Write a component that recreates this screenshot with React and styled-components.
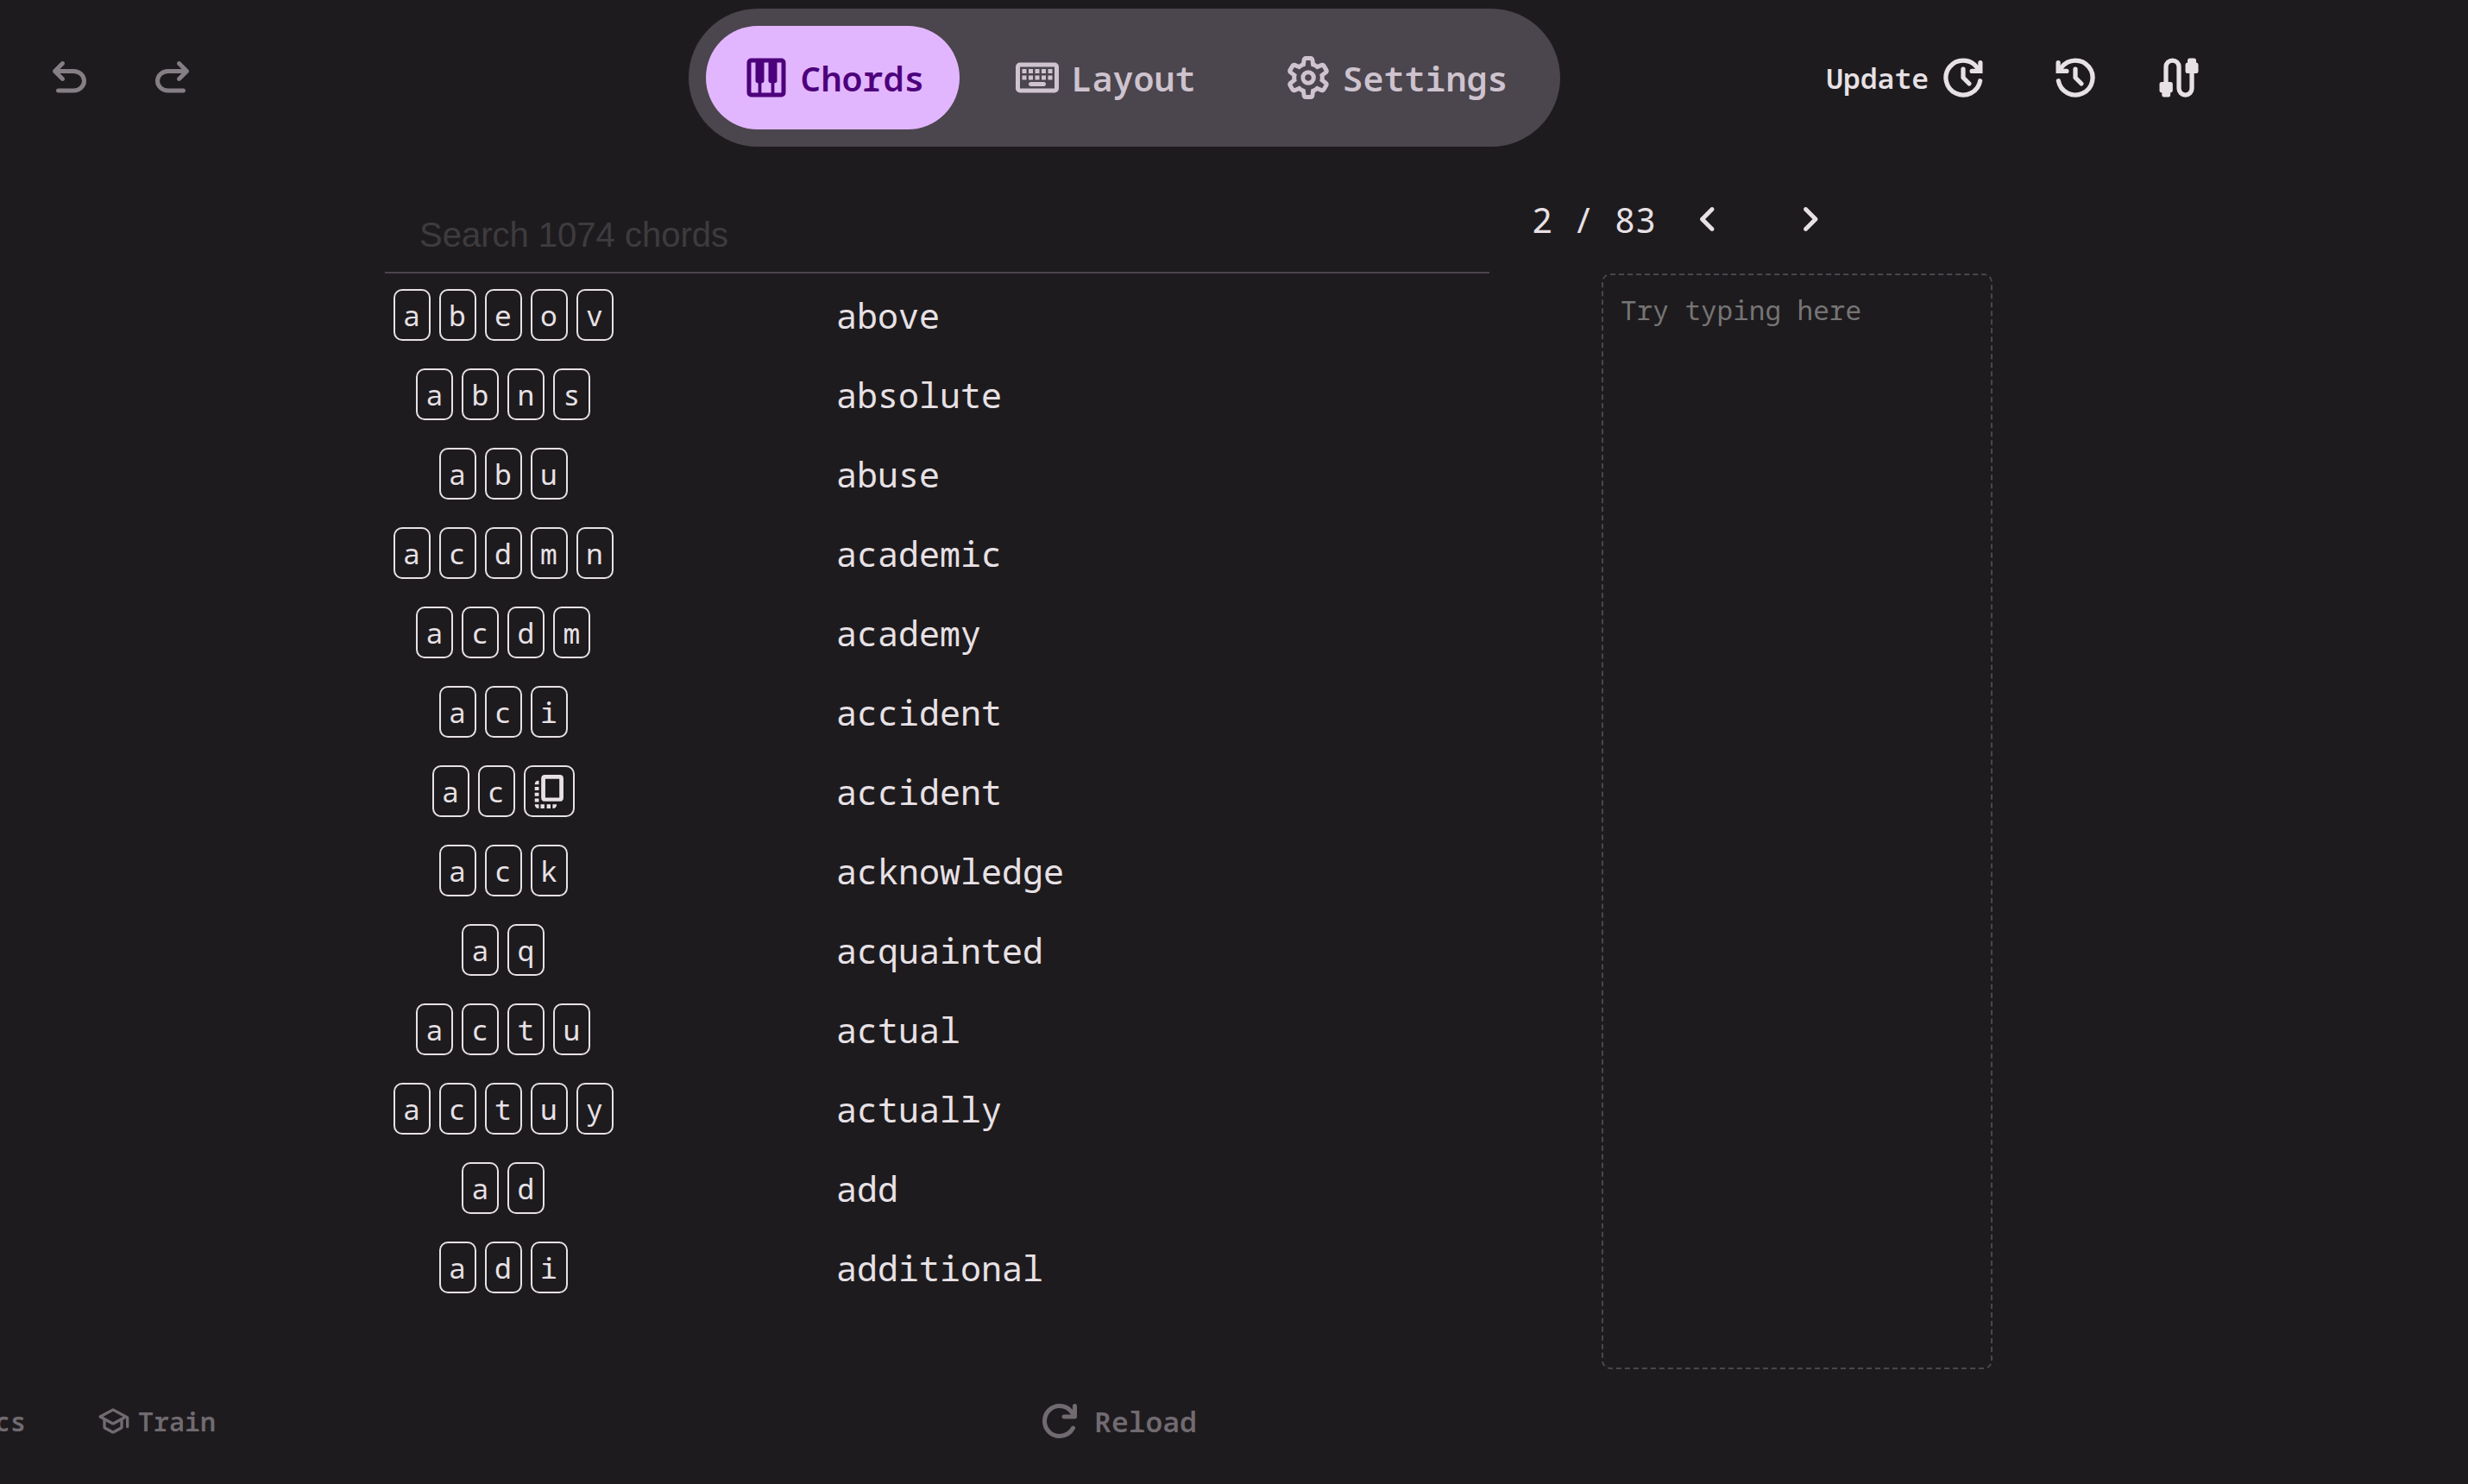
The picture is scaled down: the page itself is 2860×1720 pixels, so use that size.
import React from "react";
import styled, { createGlobalStyle, css } from "styled-components";

const color = {
  background: "#1e1b1e",
  text: "#e7e1e5",
  muted: "#857f85",
  faint: "#716b71",
  line: "#4b454d",
  variantText: "#cec3ce",
  primary: "#e2b6ff",
  onPrimary: "#4d007b",
};

const mono = `"Noto Sans Mono", "DejaVu Sans Mono", monospace`;

const GlobalStyle = createGlobalStyle`
  * { box-sizing: border-box; }
  body {
    margin: 0;
    overflow: hidden;
    background: ${color.background};
    color: ${color.text};
    font-family: ${mono};
    font-size: 40px;
  }
  button, textarea { font-family: inherit; }
`;

const Page = styled.div`
  display: flex;
  flex-direction: column;
  min-height: 100vh;
  padding: 10px 255px 13px 0;
`;

const bar = css`
  display: grid;
  grid-template-columns: minmax(0, 1fr) auto minmax(0, 1fr);
  align-items: center;
  padding: 0 20px;
`;

const Header = styled.header`
  ${bar}
`;

const Actions = styled.div`
  display: flex;
  justify-content: ${(p) => p.$align || "flex-start"};
`;

const Button = styled.button`
  display: flex;
  align-items: center;
  justify-content: center;
  gap: 10px;
  height: 120px;
  padding: ${(p) => p.$padding || "0 30px"};
  border: 0;
  background: none;
  color: ${(p) => p.$color || color.text};
  font-size: 33px;
  font-weight: 600;
  white-space: nowrap;
  cursor: pointer;
`;

const Tabs = styled.nav`
  display: flex;
  gap: 20px;
  padding: 20px;
  border-radius: 80px;
  background: ${color.line};
`;

const Tab = styled.a`
  display: flex;
  align-items: center;
  gap: 10px;
  height: 120px;
  padding: 0 40px;
  border-radius: 60px;
  background: ${(p) => (p.$active ? color.primary : "transparent")};
  color: ${(p) => (p.$active ? color.onPrimary : color.variantText)};
  font-weight: 600;
  text-decoration: none;
`;

const Glyph = styled.svg`
  flex: none;
  width: ${(p) => p.$size}px;
  height: ${(p) => p.$size}px;
  fill: currentColor;
`;

const Main = styled.main`
  flex: 1;
  display: grid;
  grid-template-columns: minmax(0, 1280fr) minmax(0, 534fr);
  column-gap: 49px;
  padding: 24px 296px 0 446px;
`;

const ListPane = styled.section`
  display: flex;
  flex-direction: column;
`;

const Search = styled.input`
  width: 100%;
  height: 123px;
  padding: 36px 40px 0;
  border: 0;
  border-bottom: 2px solid ${color.line};
  outline: 0;
  background: none;
  color: ${color.text};
  font: 40px "Liberation Sans", Arial, sans-serif;
  &::placeholder {
    color: #3e3b3f;
    opacity: 1;
  }
`;

const ChordTable = styled.table`
  width: 100%;
  margin-top: 2px;
  border-collapse: collapse;
  table-layout: fixed;
`;

const ChordRow = styled.tr`
  height: 92px;
`;

const KeysCell = styled.td`
  width: 274px;
  padding: 0;
`;

const PhraseCell = styled.td`
  padding: 0 0 0 249px;
`;

const Keys = styled.div`
  display: flex;
  justify-content: center;
  gap: 10px;
`;

const Key = styled.kbd`
  display: flex;
  align-items: center;
  justify-content: center;
  min-width: ${(p) => (p.$wide ? 59 : 43)}px;
  height: 60px;
  border: 2px solid ${color.text};
  border-radius: 10px;
  font-family: ${mono};
  font-size: 33px;
`;

const SidePane = styled.section`
  display: flex;
  flex-direction: column;
`;

const Pager = styled.div`
  display: flex;
  align-items: center;
  white-space: pre;
`;

const Practice = styled.textarea`
  flex: 1;
  margin: 3px 0 0 81px;
  padding: 20px;
  border: 2px dashed ${color.line};
  border-radius: 10px;
  outline: 0;
  resize: none;
  background: none;
  color: ${color.text};
  font-size: 31px;
  line-height: 40px;
  &::placeholder {
    color: #757575;
    opacity: 1;
  }
`;

const Footer = styled.footer`
  ${bar}
`;

const Links = styled.nav`
  display: flex;
  gap: 81px;
  margin-left: -62px;
`;

const FooterLink = styled.a`
  display: flex;
  align-items: center;
  gap: 9px;
  color: ${color.faint};
  font-size: 30px;
  font-weight: 600;
  text-decoration: none;
`;

const paths = {
  undo: "M280-200q-17 0-28.500-11.500T240-240q0-17 11.500-28.500T280-280h284q63 0 109.500-40T720-420q0-60-46.500-100T564-560H312l76 76q11 11 11 28t-11 28q-11 11-28 11t-28-11L188-572q-6-6-8.500-13t-2.500-15q0-8 2.500-15t8.500-13l144-144q11-11 28-11t28 11q11 11 11 28t-11 28l-76 76h252q97 0 166.500 63T800-420q0 94-69.500 157T564-200H280Z",
  redo: "M648-560H396q-63 0-109.500 40T240-420q0 60 46.500 100T396-280h284q17 0 28.500 11.500T720-240q0 17-11.500 28.500T680-200H396q-97 0-166.500-63T160-420q0-94 69.500-157T396-640h252l-76-76q-11-11-11-28t11-28q11-11 28-11t28 11l144 144q6 6 8.500 13t2.500 15q0 8-2.500 15t-8.500 13L628-428q-11 11-28 11t-28-11q-11-11-11-28t11-28l76-76Z",
  piano: "M200-120q-33 0-56.500-23.500T120-200v-560q0-33 23.500-56.500T200-840h560q33 0 56.500 23.500T840-760v560q0 33-23.500 56.500T760-120H200Zm0-80h130v-180h-10q-17 0-28.500-11.500T280-420v-340h-80v560Zm430 0h130v-560h-80v340q0 17-11.500 28.500T640-380h-10v180Zm-240 0h180v-180h-10q-17 0-28.500-11.500T520-420v-340h-80v340q0 17-11.500 28.500T400-380h-10v180Z",
  keyboard: "M160-200q-33 0-56.500-23.500T80-280v-400q0-33 23.500-56.500T160-760h640q33 0 56.500 23.500T880-680v400q0 33-23.500 56.500T800-200H160Zm0-80h640v-400H160v400Zm200-40h240q17 0 28.500-11.500T640-360q0-17-11.500-28.500T600-400H360q-17 0-28.500 11.500T320-360q0 17 11.500 28.500T360-320ZM200-560h80v-80h-80v80Zm120 0h80v-80h-80v80Zm120 0h80v-80h-80v80Zm120 0h80v-80h-80v80Zm120 0h80v-80h-80v80ZM200-440h80v-80h-80v80Zm120 0h80v-80h-80v80Zm120 0h80v-80h-80v80Zm120 0h80v-80h-80v80Zm120 0h80v-80h-80v80Z",
  settings: "M433-80q-27 0-46.500-18T363-142l-9-66q-13-5-24.500-12T307-235l-62 26q-25 11-50 2t-39-32l-47-82q-14-23-8-49t27-43l53-40q-1-7-1-13.500v-27q0-6.500 1-13.500l-53-40q-21-17-27-43t8-49l47-82q14-23 39-32t50 2l62 26q11-8 23-15t24-12l9-66q4-26 23.500-44t46.500-18h94q27 0 46.500 18t23.500 44l9 66q13 5 24.500 12t22.500 15l62-26q25-11 50-2t39 32l47 82q14 23 8 49t-27 43l-53 40q1 7 1 13.500v27q0 6.500-2 13.500l53 40q21 17 27 43t-8 49l-48 82q-14 23-39 32t-50-2l-60-26q-11 8-23 15t-24 12l-9 66q-4 26-23.500 44T527-80h-94Zm7-80h79l14-106q31-8 57.500-23.500T639-327l99 41 39-68-86-65q5-14 7-29.500t2-31.500q0-16-2-31.500t-7-29.500l86-65-39-68-99 42q-22-23-48.500-38.500T533-694l-13-106h-79l-14 106q-31 8-57.500 23.500T321-633l-99-41-39 68 86 64q-5 15-7 30t-2 32q0 16 2 31t7 30l-86 65 39 68 99-42q22 23 48.500 38.500T427-266l13 106Zm42-180q58 0 99-41t41-99q0-58-41-99t-99-41q-59 0-99.500 41T342-480q0 58 40.500 99t99.500 41Zm-2-80q-25 0-42.500-17.500T420-480q0-25 17.500-42.500T480-540q25 0 42.500 17.500T540-480q0 25-17.500 42.500T480-420Z",
  left: "m432-480 156 156q11 11 11 28t-11 28q-11 11-28 11t-28-11L348-452q-6-6-8.500-13t-2.500-15q0-8 2.500-15t8.500-13l184-184q11-11 28-11t28 11q11 11 11 28t-11 28L432-480Z",
  right: "M504-480 348-636q-11-11-11-28t11-28q11-11 28-11t28 11l184 184q6 6 8.500 13t2.500 15q0 8-2.500 15t-8.500 13L404-268q-11 11-28 11t-28-11q-11-11-11-28t11-28l156-156Z",
  school: "M242-249q-20-11-31-29.500T200-320v-192l-96-53q-11-6-16-15t-5-20q0-11 5-20t16-15l338-184q9-5 18.500-7.500T480-829q10 0 19.500 2.500T518-819l381 208q10 5 15.500 14.500T920-576v256q0 17-11.500 28.500T880-280q-17 0-28.500-11.500T840-320v-236l-80 44v192q0 23-11 41.500T718-249L518-141q-9 5-18.500 7.500T480-131q-10 0-19.500-2.500T442-141L242-249Zm238-203 274-148-274-148-274 148 274 148Zm0 241 200-108v-151l-161 89q-9 5-19 7.500t-20 2.500q-10 0-20-2.500t-19-7.500l-161-89v151l200 108Z",
  refresh: "M480-160q-134 0-227-93t-93-227q0-134 93-227t227-93q69 0 132 28.500T720-690v-70q0-17 11.500-28.500T760-800q17 0 28.500 11.500T800-760v200q0 17-11.500 28.500T760-520H560q-17 0-28.500-11.500T520-560q0-17 11.500-28.500T560-600h128q-32-56-87.500-88T480-720q-100 0-170 70t-70 170q0 100 70 170t170 70q68 0 124.500-34.500T692-367q8-14 22.500-19.500t29.500-.5q16 5 23 21t-1 30q-41 80-117 128t-169 48Z",
};

const Icon = ({ name, size = 60, viewBox = "0 -960 960 960", children }) => (
  <Glyph $size={size} viewBox={viewBox} aria-hidden="true">
    {name ? <path d={paths[name]} /> : children}
  </Glyph>
);

const ClockIcon = ({ forward }) => (
  <Icon>
    <g
      fill="none"
      stroke="currentColor"
      strokeWidth="84"
      strokeLinecap="round"
      strokeLinejoin="round"
    >
      <g transform={forward ? "translate(960 0) scale(-1 1)" : undefined}>
        <path d="M166 -420A320 320 0 1 0 225 -672L182 -616" />
        <path d="M162 -758V-602H318" strokeLinejoin="miter" />
      </g>
      <path d="M480 -640V-480L592 -368" />
    </g>
  </Icon>
);

const CableIcon = () => (
  <Icon>
    <path
      d="M240 -380V-680A120 120 0 0 1 480 -680V-280A120 120 0 0 0 720 -280V-580"
      fill="none"
      stroke="currentColor"
      strokeWidth="84"
    />
    <path d="M160 -400H325Q365 -400 365 -360V-240Q365 -205 322 -200V-160Q322 -120 282 -120H205Q165 -120 165 -160V-200Q120 -205 120 -240V-360Q120 -400 160 -400Z" />
    <path d="M640 -560Q600 -560 600 -600V-720Q600 -755 640 -760V-800Q640 -840 680 -840H760Q800 -840 800 -800V-760Q840 -755 840 -720V-600Q840 -560 800 -560Z" />
  </Icon>
);

const FlipIcon = () => (
  <Icon size={39} viewBox="0 0 115 115">
    <path
      d="M43 0H93Q106 0 106 13V78Q106 91 93 91H43Q30 91 30 78V13Q30 0 43 0ZM44 14V78H92V14Z"
      fillRule="evenodd"
    />
    <path d="M8 33Q8 20 22 20V33ZM8 41h14v12H8zM8 61h14v12H8zM8 81h14v12H8zM8 101H22V115Q8 115 8 101ZM28 101h13v14H28zM49 101h13v14H49zM69 101H83Q83 115 69 115Z" />
  </Icon>
);

const chords = [
  ["abeov", "above"],
  ["abns", "absolute"],
  ["abu", "abuse"],
  ["acdmn", "academic"],
  ["acdm", "academy"],
  ["aci", "accident"],
  ["ac^", "accident"],
  ["ack", "acknowledge"],
  ["aq", "acquainted"],
  ["actu", "actual"],
  ["actuy", "actually"],
  ["ad", "add"],
  ["adi", "additional"],
];

export default function App() {
  return (
    <Page>
      <GlobalStyle />
      <Header>
        <Actions>
          <Button $color={color.muted} aria-label="Undo">
            <Icon name="undo" />
          </Button>
          <Button $color={color.muted} aria-label="Redo">
            <Icon name="redo" />
          </Button>
        </Actions>
        <Tabs>
          <Tab href="#chords" $active>
            <Icon name="piano" />
            Chords
          </Tab>
          <Tab href="#layout">
            <Icon name="keyboard" />
            Layout
          </Tab>
          <Tab href="#settings">
            <Icon name="settings" />
            Settings
          </Tab>
        </Tabs>
        <Actions $align="flex-end">
          <Button $padding="0 40px">
            Update
            <ClockIcon forward />
          </Button>
          <Button aria-label="History">
            <ClockIcon />
          </Button>
          <Button aria-label="Connection">
            <CableIcon />
          </Button>
        </Actions>
      </Header>
      <Main>
        <ListPane>
          <Search
            type="search"
            aria-label="Search chords"
            placeholder="Search 1074 chords"
          />
          <ChordTable>
            <tbody>
              {chords.map(([keys, phrase]) => (
                <ChordRow key={keys}>
                  <KeysCell>
                    <Keys>
                      {[...keys].map((k) => (
                        <Key key={k} $wide={k === "^"}>
                          {k === "^" ? <FlipIcon /> : k}
                        </Key>
                      ))}
                    </Keys>
                  </KeysCell>
                  <PhraseCell>{phrase}</PhraseCell>
                </ChordRow>
              ))}
            </tbody>
          </ChordTable>
        </ListPane>
        <SidePane>
          <Pager>
            2 / 83
            <Button aria-label="Previous page">
              <Icon name="left" />
            </Button>
            <Button aria-label="Next page">
              <Icon name="right" />
            </Button>
          </Pager>
          <Practice aria-label="Practice" placeholder="Try typing here" />
        </SidePane>
      </Main>
      <Footer>
        <Links>
          <FooterLink href="#docs">Docs</FooterLink>
          <FooterLink href="#train">
            <Icon name="school" size={40} />
            Train
          </FooterLink>
        </Links>
        <Button $color={color.faint} $padding="0 40px 0 20px">
          <Icon name="refresh" />
          Reload
        </Button>
      </Footer>
    </Page>
  );
}
